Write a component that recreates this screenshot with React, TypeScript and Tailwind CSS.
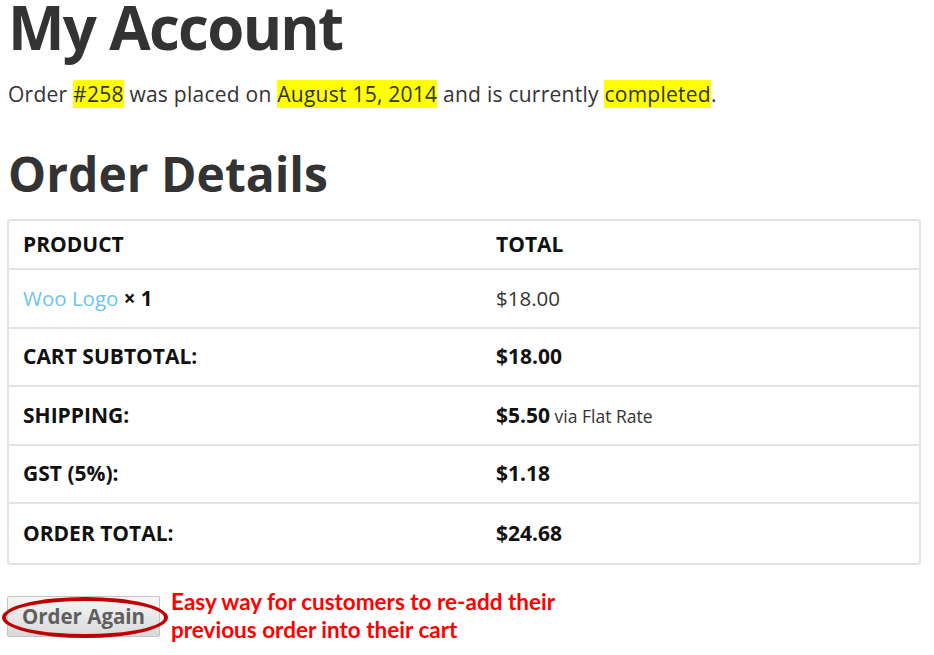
export default function App() {
  const rows = [
    { label: "CART SUBTOTAL:", value: "$18.00" },
    { label: "SHIPPING:", value: "$5.50", note: "via Flat Rate" },
    { label: "GST (5%):", value: "$1.18" },
    { label: "ORDER TOTAL:", value: "$24.68" },
  ];

  return (
    <div
      className="min-h-screen w-full bg-white px-[8px] text-[#333333]"
      style={{ fontFamily: '"Open Sans", sans-serif' }}
    >
      <h1 className="pt-[1px] text-[60px] font-bold leading-[52px] tracking-[-1.7px] text-[#333333]">
        My Account
      </h1>

      <p className="mt-[27px] text-[21px] leading-[28px] tracking-[0.25px]">
        Order <mark className="bg-[#ffff00] text-[#333333]">#258</mark> was placed on{" "}
        <mark className="bg-[#ffff00] text-[#333333]">August 15, 2014</mark> and is currently{" "}
        <mark className="bg-[#ffff00] text-[#333333]">completed</mark>.
      </p>

      <h2 className="mt-[42px] text-[48px] font-bold leading-[48px] text-[#333333]">
        Order Details
      </h2>

      {/* order table */}
      <div className="mt-[21px] mr-[5px] -ml-[1px] overflow-hidden rounded-[4px] border-2 border-[#e4e4e4]">
        <div className="grid h-[49px] grid-cols-[473px_1fr] items-center border-b-2 border-[#e4e4e4] text-[21px] font-bold text-[#111]">
          <div className="pl-[14px]">PRODUCT</div>
          <div className="pl-[14px]">TOTAL</div>
        </div>
        <div className="grid h-[58.5px] grid-cols-[473px_1fr] items-center border-b-2 border-[#e4e4e4] text-[20.5px]">
          <div className="pl-[14px]">
            <span className="text-[#6cc4ef]">Woo Logo</span>{" "}
            <span className="font-bold text-[#111]">× 1</span>
          </div>
          <div className="pl-[14px]">$18.00</div>
        </div>
        {rows.map((r, i) => (
          <div
            key={r.label}
            className={`grid h-[58.5px] grid-cols-[473px_1fr] items-center text-[21px] ${
              i < rows.length - 1 ? "border-b-2 border-[#e4e4e4]" : ""
            }`}
          >
            <div className="pl-[14px] font-bold text-[#111]">{r.label}</div>
            <div className="pl-[14px]">
              <span className="font-bold text-[#111]">{r.value}</span>
              {r.note && <span className="text-[17.5px]"> {r.note}</span>}
            </div>
          </div>
        ))}
      </div>

      {/* order again + annotation */}
      <div className="mt-[31px] flex items-start">
        <div className="relative">
          <button className="h-[41px] w-[153px] -ml-[1px] rounded-[2px] border border-[#c4c4c4] bg-gradient-to-b from-[#f7f7f7] to-[#d9d9d9] text-[20.5px] font-bold text-[#5f5f5f]">
            Order Again
          </button>
          <div className="pointer-events-none absolute -left-[6px] -right-[8px] top-[1px] bottom-[-1px] rounded-[50%] border-[4px] border-[#c00000]" />
        </div>
        <div
          className="-mt-[8px] ml-[11px] text-[22.5px] font-bold leading-[28px] text-[#ff0000]"
          style={{ fontFamily: "Lato, sans-serif" }}
        >
          Easy way for customers to re-add their
          <br />
          previous order into their cart
        </div>
      </div>
    </div>
  );
}
